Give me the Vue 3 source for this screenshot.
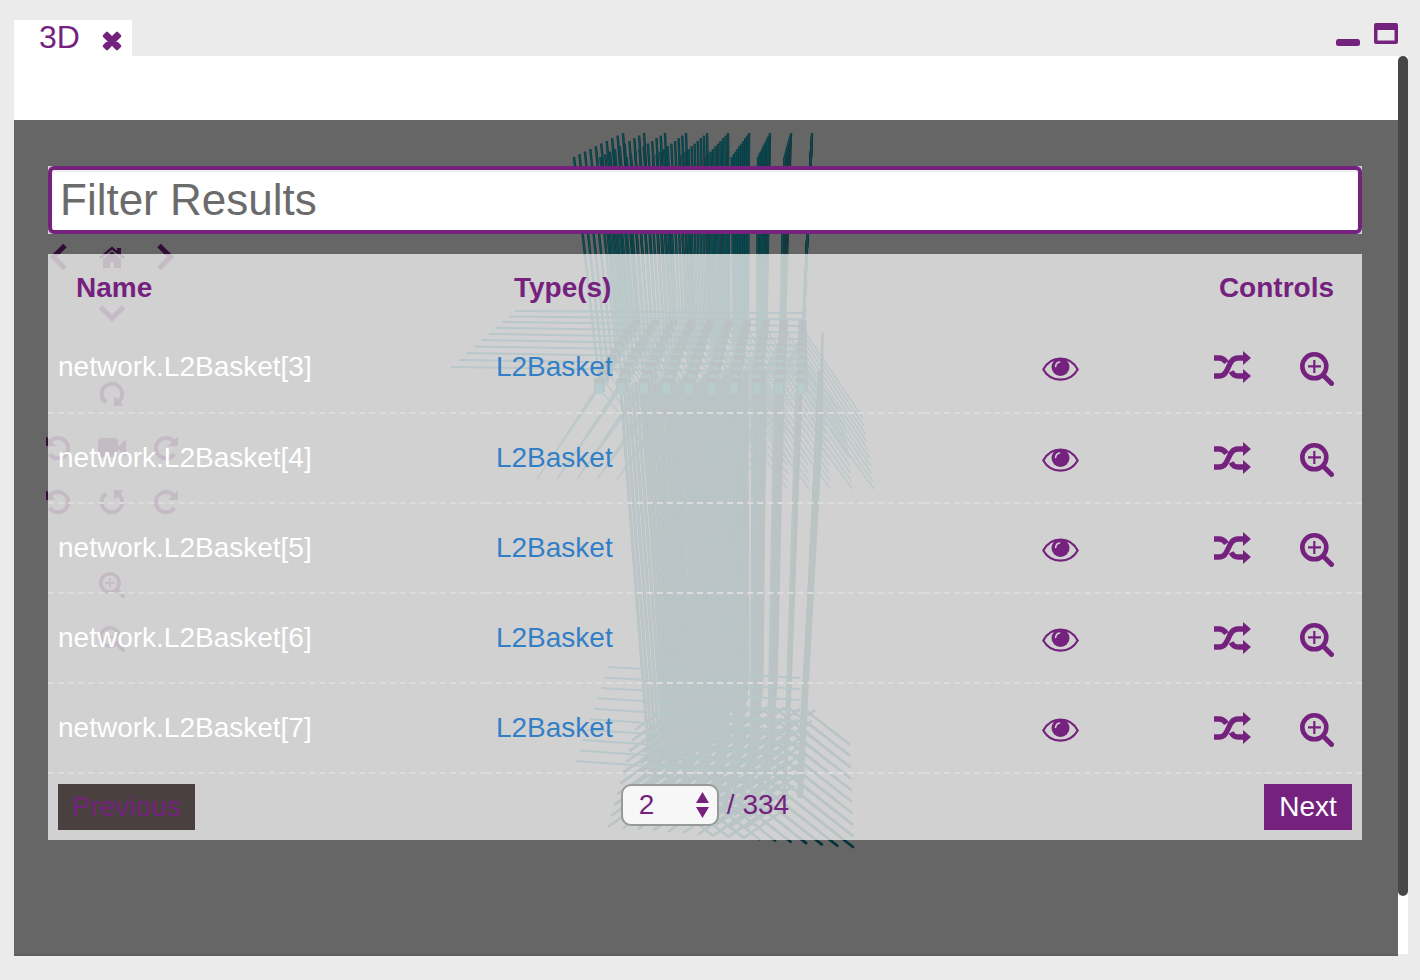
<script setup>
import { ref } from 'vue'

const filter = ref('')
const page = ref('2')
const rows = [3, 4, 5, 6, 7].map((n) => ({ name: `network.L2Basket[${n}]`, type: 'L2Basket' }))

const steps = [0, 1, 2, 3, 4, 5, 6, 7, 8, 9]
const mix = (a, b, t) => a + (b - a) * t
const seg = (x1, y1, x2, y2) =>
  `M${x1.toFixed(1)} ${y1.toFixed(1)}L${x2.toFixed(1)} ${y2.toFixed(1)}`

const upper = []
const lower = []
const fans = []
const baseFans = []
const rails = []
const cells = []

for (const j of steps) {
  const t = j / 9
  for (const i of steps) {
    const r = 9 - i
    const cx = mix(637 + 18.5 * i, 599 + 22.5 * i, t)
    const cy = mix(322, 380, t * (0.7 + 0.3 * t))
    upper.push(seg(mix(623 + 21 * i, 574 + 26.3 * i, t), mix(133, 157, t), cx, cy))
    cells.push({ x: cx - 4, y: cy, w: mix(7, 10, t), h: mix(7, 14, t) })
    lower.push(seg(mix(820 - 18.3 * r, 819 - 22 * r, t), mix(370, 392, t), mix(804 - 14 * r, 801 - 16.6 * r, t), mix(690, 792, t)))
    fans.push(seg(cx, cy + 8, mix(590, 537, t) + 20 * i, mix(402, 479, t)))
    fans.push(seg(cx, cy + 8, mix(863, 874, t) - r * mix(19, 21.6, t), mix(418, 489, t)))
    const lex = mix(636, 609, t) + i * 15
    const ley = mix(729, 826, t) + i * 1.3
    baseFans.push(seg(lex, ley, lex + 43, ley - 30))
    const rex = mix(849, 853, t) - r * 15.6
    const rey = mix(744, 847, t) - r * 1.3
    baseFans.push(seg(rex, rey, rex - 45, rey - 35))
  }
  const s = t * (0.85 + 0.15 * t)
  rails.push(seg(mix(515, 451, s), mix(311, 367, s), 803, mix(313, 372, t)))
  rails.push(seg(mix(608, 576, t), mix(667, 761, t), 800, mix(678, 777, t)))
}
</script>

<template>
  <main class="app">
    <header class="bar">
      <div class="tab">
        <span>3D</span>
        <button class="plain" aria-label="Close tab">
          <svg width="20" height="20" viewBox="0 0 20 20"><path d="M5 2L10 7L15 2L18 5L13 10L18 15L15 18L10 13L5 18L2 15L7 10L2 5Z" fill="currentColor" stroke="currentColor" stroke-width="2.600" stroke-linejoin="round" /></svg>
        </button>
      </div>
      <div class="win">
        <button class="plain" aria-label="Minimize">
          <svg width="24" height="24" viewBox="0 0 24 24"><rect y="17" width="24" height="7" rx="2.5" fill="currentColor" /></svg>
        </button>
        <button class="plain" aria-label="Maximize">
          <svg width="24" height="24" viewBox="0 0 24 24"><path fill-rule="evenodd" fill="currentColor" d="M2 1H22Q24 1 24 3V20Q24 22 22 22H2Q0 22 0 20V3Q0 1 2 1ZM3.5 8V18.5H20.5V8Z" /></svg>
        </button>
      </div>
    </header>

    <div class="body">
      <div class="content">
        <div class="strip"></div>
        <section class="stage">
          <svg class="scene" viewBox="14 120 1384 836" preserveAspectRatio="xMidYMin meet" aria-hidden="true">
            <g fill="none">
              <path :d="fans.join('')" stroke="#17424a" stroke-width="1.600" />
              <path :d="baseFans.join('')" stroke="#003238" stroke-width="2.600" stroke-linecap="round" />
              <template v-for="(d, k) in lower" :key="k">
                <path :d="d" stroke="#16282b" stroke-width="3" />
                <path :d="d" stroke="#003c46" stroke-width="1.600" />
              </template>
              <template v-for="(d, k) in upper" :key="k">
                <path :d="d" stroke="#1d3235" stroke-width="2.400" />
                <path :d="d" stroke="#005059" stroke-width="1.300" />
              </template>
              <path :d="rails.join('')" stroke="#003e46" stroke-width="2" />
            </g>
            <path d="M821.500 332L819 430L801 700L797 798H803L808 700L823 430L823.500 332Z" fill="#0e3236" />
            <g v-for="(c, k) in cells" :key="k">
              <rect :x="c.x - 1" :y="c.y - 2" :width="c.w + 1" :height="c.h" rx="1" fill="#0c2a2d" />
              <rect :x="c.x" :y="c.y + 3" :width="c.w - 2" :height="c.h - 3" rx="1" fill="#004b56" />
            </g>
          </svg>

          <svg width="0" height="0" class="defs" aria-hidden="true">
            <symbol id="i-turn" viewBox="0 0 24 24">
              <path d="M20.300 18A10.200 10.200 0 1 1 19.300 5" fill="none" stroke="currentColor" stroke-width="4" />
              <path d="M23.500 1V9.500H15L18 6.500L20 4.500Z" fill="currentColor" stroke="currentColor" stroke-width="1" />
            </symbol>
            <symbol id="i-zoom" viewBox="0 0 34 34">
              <path d="M23 23L31.500 31.500" fill="none" stroke="currentColor" stroke-width="5" stroke-linecap="round" />
              <circle cx="14.300" cy="14.300" r="12" fill="none" stroke="currentColor" stroke-width="4.600" />
              <path d="M8 14.300H21M14.300 8V21" fill="none" stroke="currentColor" stroke-width="2.200" />
            </symbol>
          </svg>

          <div class="pad">
            <div class="pad-group">
              <button class="plain" aria-label="Pan left"><svg width="26" height="26" viewBox="0 0 26 26"><path d="M20 1.500L8.500 13L20 24.500" fill="none" stroke="currentColor" stroke-width="5" /></svg></button>
              <button class="plain" aria-label="Home"><svg width="26" height="24" viewBox="0 0 26 24"><path d="M1 13L13 3L25 13" fill="none" stroke="currentColor" stroke-width="2.400" /><path d="M18 3H22V11L18 7ZM13 6.500L22 14V23H15V17H11V23H4V14Z" fill="currentColor" /></svg></button>
              <button class="plain" aria-label="Pan right"><svg width="26" height="26" viewBox="0 0 26 26"><path d="M6 1.500L17.500 13L6 24.500" fill="none" stroke="currentColor" stroke-width="5" /></svg></button>
              <button class="plain mid" aria-label="Pan down"><svg width="26" height="24" viewBox="0 0 26 24"><path d="M1.500 8L13 19.500L24.500 8" fill="none" stroke="currentColor" stroke-width="5" /></svg></button>
            </div>
            <div class="pad-group">
              <button class="plain mid" aria-label="Rotate up"><svg class="r90" width="24" height="24"><use href="#i-turn" /></svg></button>
              <button class="plain first" aria-label="Rotate left"><svg class="flip" width="24" height="24"><use href="#i-turn" /></svg></button>
              <button class="plain" aria-label="Camera home"><svg width="28" height="24" viewBox="0 0 28 24"><rect y="2" width="20" height="19" rx="4" fill="currentColor" /><path d="M19 12L28 3V21Z" fill="currentColor" /></svg></button>
              <button class="plain" aria-label="Rotate right"><svg width="24" height="24"><use href="#i-turn" /></svg></button>
              <button class="plain" aria-label="Roll left"><svg class="flip" width="24" height="24"><use href="#i-turn" /></svg></button>
              <button class="plain" aria-label="Rotate down"><svg class="r90flip" width="24" height="24"><use href="#i-turn" /></svg></button>
              <button class="plain" aria-label="Roll right"><svg width="24" height="24"><use href="#i-turn" /></svg></button>
            </div>
            <div class="pad-group">
              <button class="plain mid" aria-label="Zoom in"><svg width="26" height="26"><use href="#i-zoom" /></svg></button>
              <button class="plain mid" aria-label="Zoom out"><svg width="26" height="26" viewBox="0 0 34 34"><path d="M23 23L31.500 31.500" fill="none" stroke="currentColor" stroke-width="5" stroke-linecap="round" /><circle cx="14.300" cy="14.300" r="12" fill="none" stroke="currentColor" stroke-width="4.600" /><path d="M8 14.300H21" fill="none" stroke="currentColor" stroke-width="2.200" /></svg></button>
            </div>
          </div>

          <div class="field">
            <input v-model="filter" type="text" placeholder="Filter Results" aria-label="Filter Results" />
          </div>

          <div class="results">
            <table>
              <thead>
                <tr><th class="c-name">Name</th><th class="c-type">Type(s)</th><th class="c-ctl">Controls</th></tr>
              </thead>
              <tbody>
                <tr v-for="r in rows" :key="r.name">
                  <td>{{ r.name }}</td>
                  <td><a href="#">{{ r.type }}</a></td>
                  <td class="c-ctl">
                    <div class="actions">
                      <button class="plain eye" aria-label="Toggle visibility">
                        <svg width="37" height="24" viewBox="0 0 37 24">
                          <path d="M1.300 12.500C9 -2 28 -2 35.700 12.500C28 26 9 26 1.300 12.500Z" fill="none" stroke="currentColor" stroke-width="2.200" />
                          <circle cx="18.500" cy="10" r="9" fill="currentColor" />
                          <path d="M13.600 9.500Q14 5.500 17.600 5" fill="none" stroke="#d1d1d1" stroke-width="1.600" stroke-linecap="round" />
                        </svg>
                      </button>
                      <button class="plain shuffle" aria-label="Shuffle colour">
                        <svg width="37" height="32" viewBox="0 0 37 32">
                          <path d="M0 25H5C16 25 13 7 24 7H30M0 7H5Q9.500 7 12.500 11.500M17 20.500Q19.500 25 24 25H30" fill="none" stroke="currentColor" stroke-width="5.400" />
                          <path d="M29 0L37 7L29 14ZM29 18L37 25L29 32Z" fill="currentColor" />
                        </svg>
                      </button>
                      <button class="plain zoom" aria-label="Zoom to"><svg width="34" height="34"><use href="#i-zoom" /></svg></button>
                    </div>
                  </td>
                </tr>
              </tbody>
            </table>
            <footer class="pager">
              <button class="btn prev" disabled>Previous</button>
              <div class="pages">
                <div class="pick">
                  <select v-model="page" aria-label="Page">
                    <option>1</option><option>2</option><option>3</option>
                  </select>
                  <svg width="13" height="26" viewBox="0 0 13 26"><path d="M6.500 0L13 11H0ZM6.500 26L0 15H13Z" fill="currentColor" /></svg>
                </div>
                <span>/ 334</span>
              </div>
              <button class="btn next">Next</button>
            </footer>
          </div>
        </section>
      </div>
      <div class="track"><div class="thumb"></div></div>
    </div>
  </main>
</template>

<style>
body { background: #ebebeb; }
</style>

<style scoped>
* { box-sizing: border-box; }
.app {
  min-height: 100vh;
  display: flex;
  flex-direction: column;
  padding: 20px 12px 24px 14px;
  background: #ebebeb;
  color: #75227f;
  font: 28px/34px "Liberation Sans", Arial, sans-serif;
}
.plain { border: 0; padding: 0; background: none; color: inherit; display: flex; align-items: center; justify-content: center; }
.bar { display: flex; justify-content: space-between; height: 36px; }
.tab { display: flex; gap: 22px; padding: 0 10px 0 25px; background: #fff; font-size: 32px; }
.tab .plain { padding-top: 5px; }
.win { display: flex; gap: 14px; align-items: flex-start; padding: 2px 10px 0 0; }
.body { flex: 1; display: flex; }
.content { flex: 1; display: flex; flex-direction: column; }
.strip { height: 64px; background: #fff; }
.stage {
  flex: 1;
  position: relative;
  display: flex;
  flex-direction: column;
  gap: 20px;
  padding: 46px 36px 46px 34px;
  background: #666;
  border-bottom: 2px solid #5e5e5e;
}
.track { width: 10px; margin-bottom: 2px; background: #fff; }
.thumb { height: 93.5%; border-radius: 5px; background: #474747; }
.scene { position: absolute; inset: 0; width: 100%; }
.defs { position: absolute; }
.pad { position: absolute; left: 17px; top: 110px; display: flex; flex-direction: column; gap: 29px; color: #310d36; }
.pad-group { display: grid; grid-template-columns: repeat(3, 54px); grid-auto-rows: 54px; }
.mid { grid-column: 2; }
.first { grid-column: 1; }
.flip { transform: scaleX(-1); }
.r90 { transform: rotate(90deg); }
.r90flip { transform: rotate(90deg) scaleX(-1); }
.field { position: relative; background: #d1d1d1; }
.field input {
  display: block;
  width: 100%;
  height: 68px;
  padding: 0 8px;
  border: 4px solid #75227f;
  border-radius: 6px;
  background: #fff;
  box-shadow: inset 0 2px 2px rgba(0, 0, 0, .08);
  color: #555;
  font: 44px/56px "Liberation Sans", Arial, sans-serif;
  outline: 0;
}
.field input::placeholder { color: #6b6b6b; opacity: 1; }
.results { position: relative; background: rgba(245, 245, 245, .75); }
table { width: 100%; border-collapse: separate; border-spacing: 0; table-layout: fixed; }
th { height: 68px; padding: 0 28px; text-align: left; font-weight: 700; }
th.c-ctl { text-align: right; }
.c-name, .c-type { width: 33.33%; }
td { height: 90px; padding: 0 10px; color: #fff; border-bottom: 2px dashed #dcdcdc; }
tbody tr:first-child td { height: 92px; }
td a { color: #337fc6; text-decoration: none; }
td.c-ctl { padding-right: 28px; color: #75227f; }
.actions { display: flex; justify-content: flex-end; align-items: center; }
.eye { margin-right: 135px; padding-top: 4px; }
.shuffle { margin-right: 49px; }
.zoom { padding-top: 4px; }
.pager { display: grid; grid-template-columns: 1fr auto 1fr; align-items: start; padding: 10px; }
.btn { height: 46px; padding: 0 14px; border: 0; font: inherit; }
.prev { justify-self: start; background: #4b4040; color: #75227f; }
.next { justify-self: end; min-width: 88px; background: #75227f; color: #fff; }
.pages { display: flex; align-items: center; gap: 8px; }
.pick { position: relative; }
.pick select {
  display: block;
  width: 98px;
  height: 42px;
  padding: 0 16px;
  appearance: none;
  border: 2px solid #999;
  border-radius: 10px;
  background: #f7f7f7;
  color: inherit;
  font: inherit;
}
.pick svg { position: absolute; right: 10px; top: 8px; pointer-events: none; }
</style>
